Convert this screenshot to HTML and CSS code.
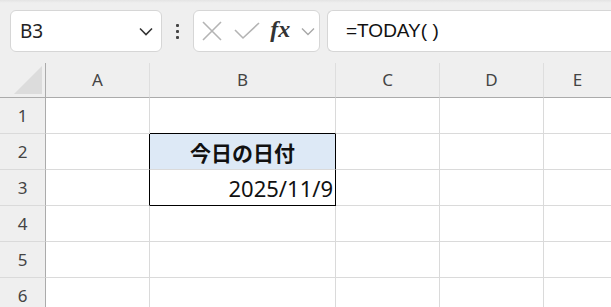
FILE: index.html
```html
<!DOCTYPE html>
<html lang="ja">
<head>
  <meta charset="UTF-8">
  <title>Sheet</title>
  <link rel="stylesheet" href="styles.css">
</head>
<body>
  <div class="toolbar">
    <div class="namebox">
      <span class="ref">B3</span>
      <svg class="chev" width="14" height="9" viewBox="0 0 14 9"><path d="M1 1.5 L7 7.5 L13 1.5" fill="none" stroke="#333" stroke-width="1.6"/></svg>
    </div>
    <div class="dots"><i></i><i></i><i></i></div>
    <div class="fxbox">
      <svg width="22" height="22" viewBox="0 0 22 22"><path d="M2 2 L20 20 M20 2 L2 20" stroke="#b4b4b4" stroke-width="1.6"/></svg>
      <svg width="26" height="20" viewBox="0 0 26 20"><path d="M1 9 L9 17 L25 2" fill="none" stroke="#b4b4b4" stroke-width="1.6"/></svg>
      <span class="fx">fx</span>
      <svg width="14" height="9" viewBox="0 0 14 9"><path d="M1 1.5 L7 7.5 L13 1.5" fill="none" stroke="#a8a8a8" stroke-width="1.4"/></svg>
    </div>
    <div class="formula">=TODAY( )</div>
  </div>

  <div class="sheet">
    <div class="corner"><span class="tri"></span></div>
    <div class="colhead">A</div>
    <div class="colhead">B</div>
    <div class="colhead">C</div>
    <div class="colhead">D</div>
    <div class="colhead last">E</div>

    <div class="rowhead">1</div>
    <div class="cell"></div>
    <div class="cell bb"></div>
    <div class="cell"></div>
    <div class="cell"></div>
    <div class="cell last"></div>

    <div class="rowhead">2</div>
    <div class="cell br"></div>
    <div class="cell title br">今日の日付</div>
    <div class="cell"></div>
    <div class="cell"></div>
    <div class="cell last"></div>

    <div class="rowhead">3</div>
    <div class="cell br"></div>
    <div class="cell date br bb">2025/11/9</div>
    <div class="cell"></div>
    <div class="cell"></div>
    <div class="cell last"></div>

    <div class="rowhead">4</div>
    <div class="cell"></div>
    <div class="cell"></div>
    <div class="cell"></div>
    <div class="cell"></div>
    <div class="cell last"></div>

    <div class="rowhead">5</div>
    <div class="cell"></div>
    <div class="cell"></div>
    <div class="cell"></div>
    <div class="cell"></div>
    <div class="cell last"></div>

    <div class="rowhead">6</div>
    <div class="cell"></div>
    <div class="cell"></div>
    <div class="cell"></div>
    <div class="cell"></div>
    <div class="cell last"></div>
  </div>
</body>
</html>
```

FILE: styles.css
```css
body {
  margin: 0;
  background: #efefef;
  font-family: "Noto Sans", "Noto Sans CJK JP", sans-serif;
  color: #222;
  overflow: hidden;
  width: 611px;
  height: 307px;
}
.toolbar {
  height: 63px;
  box-sizing: border-box;
  padding-top: 10px;
  padding-left: 10px;
  display: flex;
  align-items: flex-start;
  background: linear-gradient(#e4e4e4, #efefef 3px);
}
.namebox, .fxbox, .formula {
  height: 42px;
  box-sizing: border-box;
  background: #fff;
  border: 1px solid #d6d6d6;
  border-radius: 6px;
  display: flex;
  align-items: center;
}
.namebox {
  width: 152px;
  padding: 0 8px 0 9px;
  justify-content: space-between;
}
.ref {
  font-size: 19px;
  color: #222;
}
.dots {
  width: 31px;
  height: 42px;
  display: flex;
  flex-direction: column;
  align-items: center;
  justify-content: center;
  gap: 3px;
}
.dots i {
  width: 3px;
  height: 3px;
  background: #444;
  border-radius: 1px;
}
.fxbox {
  width: 127px;
  padding: 0 4px 0 7px;
  justify-content: space-between;
  background: #fff;
}
.fx {
  font-family: "Liberation Serif", serif;
  font-style: italic;
  font-weight: bold;
  font-size: 24px;
  color: #333;
  margin-top: -4px;
}
.formula {
  flex: 1;
  margin-left: 7px;
  margin-right: -10px;
  padding-left: 18px;
  font-family: "Liberation Sans", sans-serif;
  font-size: 19px;
  color: #111;
  border-right: none;
  border-radius: 6px 0 0 6px;
}
.sheet {
  display: grid;
  grid-template-columns: 46px 104px 186px 104px 104px 1fr;
  grid-template-rows: 35px repeat(6, 36px);
  background: #fff;
}
.corner, .colhead {
  background: #efefef;
  border-bottom: 1px solid #ababab;
}
.corner {
  border-right: 1px solid #ababab;
  position: relative;
}
.tri {
  position: absolute;
  left: 14px;
  top: 3px;
  width: 28px;
  height: 28px;
  background: #dcdcdc;
  clip-path: polygon(100% 0, 100% 100%, 0 100%);
}
.colhead {
  border-right: 1px solid #dedede;
  display: flex;
  align-items: center;
  justify-content: center;
  font-size: 17px;
  color: #444;
  padding-bottom: 2px;
}
.rowhead {
  background: #efefef;
  border-right: 1px solid #ababab;
  border-bottom: 1px solid #dadada;
  display: flex;
  align-items: center;
  justify-content: center;
  font-size: 17px;
  color: #444;
}
.cell {
  border-right: 1px solid #dadada;
  border-bottom: 1px solid #dadada;
  display: flex;
  align-items: center;
  font-size: 22px;
  color: #111;
}
.cell.last, .colhead.last {
  border-right: none;
}
.cell.br {
  border-right-color: #000;
}
.cell.bb {
  border-bottom-color: #000;
}
.title {
  background: #dde9f6;
  justify-content: center;
  font-weight: bold;
  font-size: 21px;
}
.date {
  justify-content: flex-end;
  padding-right: 2px;
}
```
